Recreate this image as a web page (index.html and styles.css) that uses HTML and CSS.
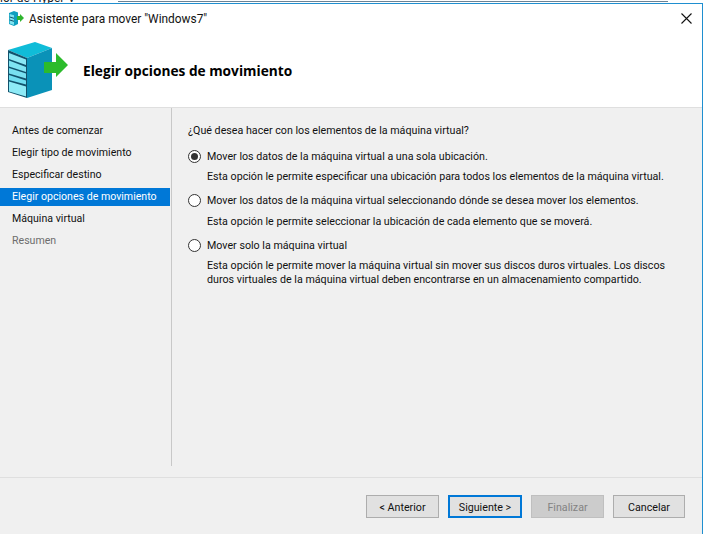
FILE: index.html
```html
<!DOCTYPE html>
<html lang="es">
<head>
<meta charset="utf-8">
<title>Asistente para mover</title>
<link rel="stylesheet" href="styles.css">
</head>
<body>
<div class="backstrip"><span class="backtext">ior de Hyper-V</span><span class="backrule"></span></div>
<div class="window">
  <div class="titlebar">
    <svg class="titleicon" width="16" height="15" viewBox="0 0 16 15">
      <path d="M0 2 L5 0 L9 1.5 L9 13 L5 15 L0 13 Z" fill="#0f9fc0"/>
      <path d="M0.7 3 L5 4.3 L5 14 L0.7 12.6 Z" fill="#7fe3f2"/>
      <path d="M0.7 6 L5 7.3 M0.7 9 L5 10.3" stroke="#12506a" stroke-width="1"/>
      <path d="M8 5 H11 V3 L15 7 L11 11 V9 H8 Z" fill="#2fb52f"/>
    </svg>
    <span class="titletext">Asistente para mover "Windows7"</span>
    <svg class="close" width="11" height="11" viewBox="0 0 11 11"><path d="M0.5 0.5 L10.5 10.5 M10.5 0.5 L0.5 10.5" stroke="#111" stroke-width="1.1"/></svg>
  </div>
  <div class="banner">
    <svg class="bannericon" width="60" height="56" viewBox="0 0 60 56">
      <path d="M0 8 L27 0 L44 6 L19 16 Z" fill="#10bcd8"/>
      <path d="M19 16 L44 6 L44 48 L19 56 Z" fill="#0a92b8"/>
      <path d="M0 8 L19 16 L19 56 L0 50 Z" fill="#12526c"/>
      <path d="M1 11 L18 17.5 L18 23 L1 17 Z" fill="#8be8f4"/>
      <path d="M1 18.5 L18 25 L18 30 L1 24.5 Z" fill="#7fe4f2"/>
      <path d="M1 26 L18 31.5 L18 36.5 L1 31.5 Z" fill="#78e0f0"/>
      <path d="M1 33 L18 38.5 L18 42.5 L1 38 Z" fill="#70def0"/>
      <path d="M1 39.5 L18 44.5 L18 54.5 L1 49.5 Z" fill="#8eeaf6"/>
      <path d="M36 20 H48 V11 L60 23 L48 35 V31 H36 Z" fill="#2cbb2c"/>
    </svg>
    <h1 class="heading">Elegir opciones de movimiento</h1>
  </div>
  <div class="body">
    <div class="main">
      <nav class="steps">
        <div class="step">Antes de comenzar</div>
        <div class="step">Elegir tipo de movimiento</div>
        <div class="step">Especificar destino</div>
        <div class="step current">Elegir opciones de movimiento</div>
        <div class="step">Máquina virtual</div>
        <div class="step muted">Resumen</div>
      </nav>
      <div class="content">
        <p class="question">¿Qué desea hacer con los elementos de la máquina virtual?</p>
        <div class="option">
          <div class="optrow"><span class="radio checked"></span><span>Mover los datos de la máquina virtual a una sola ubicación.</span></div>
          <p class="desc">Esta opción le permite especificar una ubicación para todos los elementos de la máquina virtual.</p>
        </div>
        <div class="option">
          <div class="optrow"><span class="radio"></span><span>Mover los datos de la máquina virtual seleccionando dónde se desea mover los elementos.</span></div>
          <p class="desc">Esta opción le permite seleccionar la ubicación de cada elemento que se moverá.</p>
        </div>
        <div class="option">
          <div class="optrow"><span class="radio"></span><span>Mover solo la máquina virtual</span></div>
          <p class="desc">Esta opción le permite mover la máquina virtual sin mover sus discos duros virtuales. Los discos<br>duros virtuales de la máquina virtual deben encontrarse en un almacenamiento compartido.</p>
        </div>
      </div>
    </div>
    <div class="footer">
      <button class="btn">&lt; Anterior</button>
      <button class="btn primary">Siguiente &gt;</button>
      <button class="btn disabled">Finalizar</button>
      <button class="btn last">Cancelar</button>
    </div>
  </div>
</div>
</body>
</html>
```
FILE: styles.css
```css
* { box-sizing: border-box; }
html, body { margin: 0; padding: 0; }
body {
  width: 703px;
  height: 534px;
  overflow: hidden;
  background: #fff;
  font-family: Roboto, "Liberation Sans", sans-serif;
  font-size: 10.7px;
  color: #111;
}
.backstrip { height: 3px; overflow: hidden; background: #fff; display: flex; }
.backtext { margin-top: -9px; font-size: 12px; line-height: 14px; color: #222; white-space: nowrap; }
.backrule { height: 1px; background: #6b8294; margin: 1px 35px 0 43px; flex: 1; }
.window { height: 531px; display: flex; flex-direction: column; background: #fff; border-top: 1px solid #1f8fd0; border-right: 1px solid #1f8fd0; }
.titlebar { height: 29px; display: flex; align-items: center; padding: 0 10px 0 9px; }
.titleicon { margin-right: 4px; }
.titletext { font-size: 11.9px; }
.close { margin-left: auto; }
.banner { height: 75px; display: flex; align-items: center; padding: 0 0 0 8px; border-bottom: 1px solid #dfdfdf; }
.bannericon { flex: none; }
.heading { margin: 0 0 0 15px; font-size: 13.7px; font-weight: 700; color: #000; font-family: "Open Sans", sans-serif; }
.body { flex: 1; display: flex; flex-direction: column; background: #f0f0f0; }
.main { height: 370px; display: flex; border-bottom: 1px solid #dfdfdf; }
.steps { width: 172px; padding-top: 12px; border-right: 1px solid #c8c8c8; margin-bottom: 11px; font-size: 10.6px; }
.step { height: 22px; line-height: 22px; padding-left: 12px; }
.step.current { background: #0078d7; color: #fff; width: 170px; height: 18px; line-height: 18px; margin: 2px 0; }
.step.muted { color: #6d6d6d; }
.content { flex: 1; padding: 15px 16px 0 16px; }
.question { margin: 0 0 8px; line-height: 16px; }
.option { margin-bottom: 7.5px; }
.optrow { display: flex; align-items: center; height: 18px; }
.radio { width: 13px; height: 13px; border: 1px solid #333; border-radius: 50%; background: #fff; margin-right: 6px; flex: none; position: relative; }
.radio.checked::after { content: ""; position: absolute; left: 2px; top: 2px; width: 7px; height: 7px; border-radius: 50%; background: #333; }
.desc { margin: 0 0 0 19px; line-height: 14px; padding-top: 5px; }
.footer { flex: 1; display: flex; justify-content: flex-end; gap: 9px; padding: 17px 17px 0 0; }
.btn { width: 73px; height: 23px; padding: 1px 0 0; border: 1px solid #adadad; background: #e1e1e1; font: inherit; color: #111; }
.btn.primary { width: 74px; border: 2px solid #0078d7; }
.btn.disabled { background: #ccc; border-color: #bfbfbf; color: #838383; }
.btn.last { width: 72px; }
```
